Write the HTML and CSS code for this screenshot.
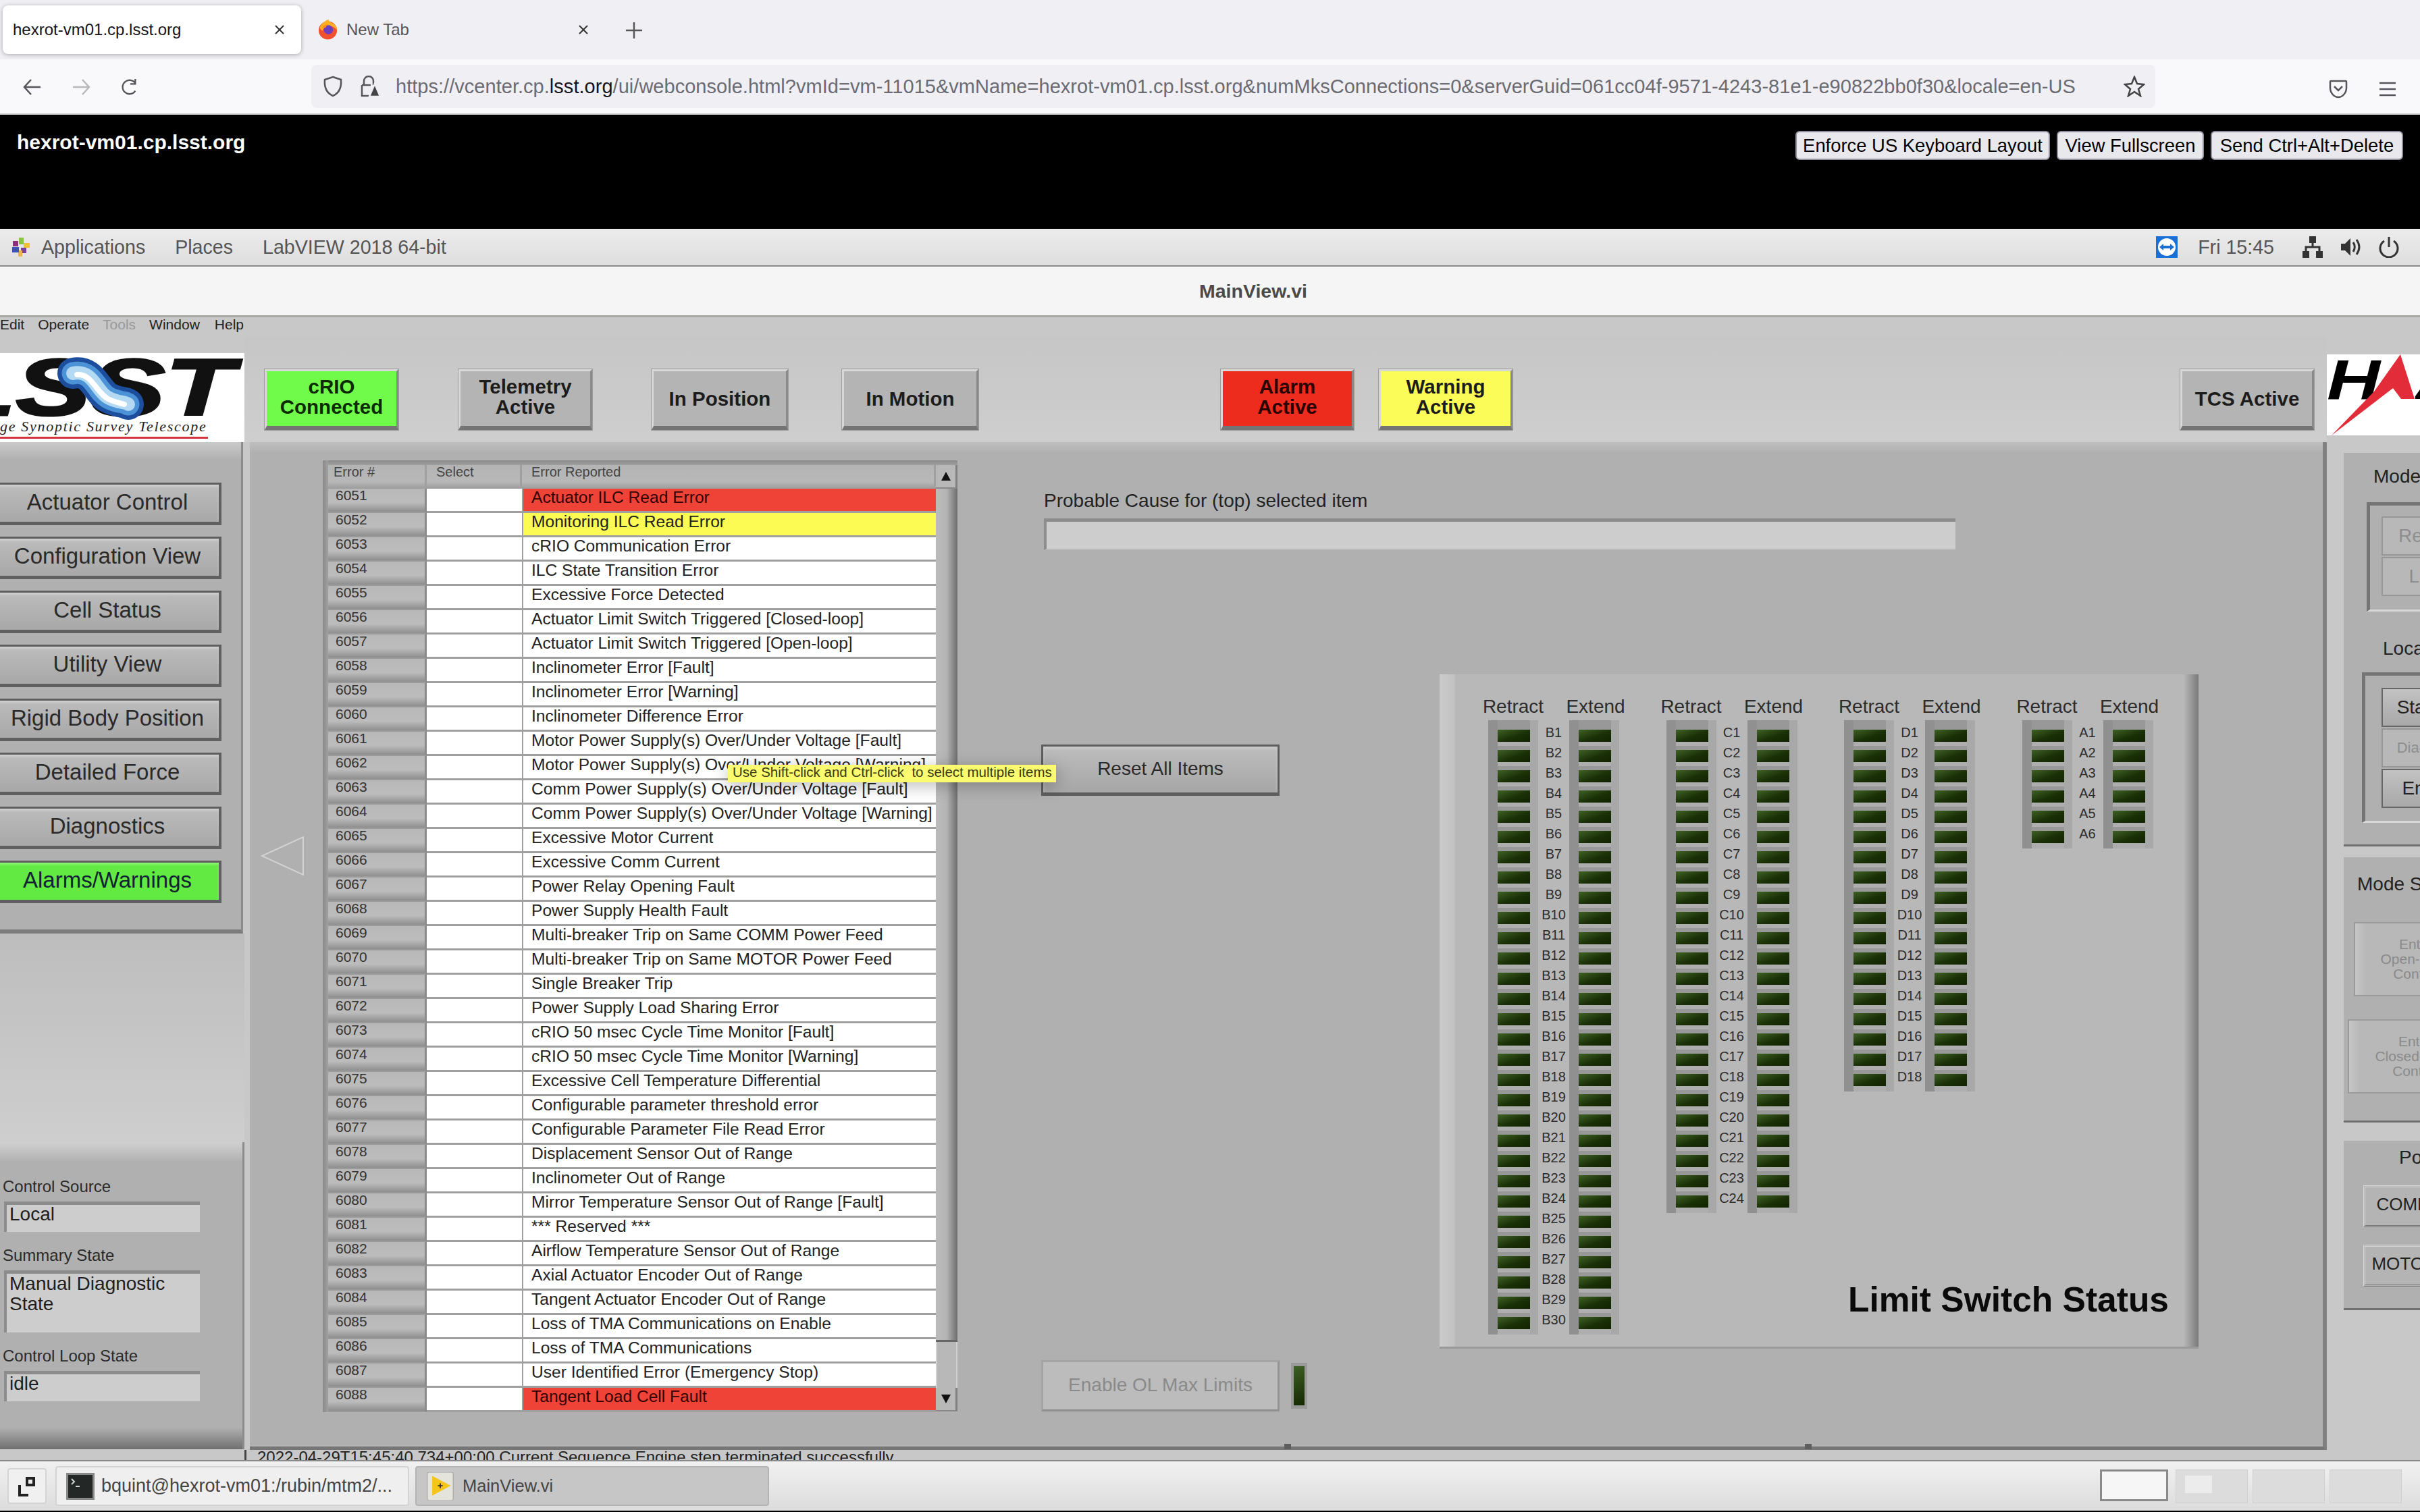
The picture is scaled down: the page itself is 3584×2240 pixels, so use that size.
FILE: index.html
```html
<!doctype html>
<html lang="en">
<head>
    <meta charset="UTF-8" />
    <title>hexrot-vm01.cp.lsst.org</title>
    <link rel="stylesheet" href="styles.css">
</head>
<body>

    <div class="tabstrip">
        <div class="tab tab-active">
            <span class="tab-title">hexrot-vm01.cp.lsst.org</span>
            <svg class="tab-close" viewBox="0 0 16 16"><path d="M2 2l12 12M14 2L2 14"/></svg>
        </div>
        <div class="tab tab-idle">
            <svg class="firefox" viewBox="0 0 32 32">
                <circle cx="16" cy="17" r="14" fill="#f2502f"/>
                <path d="M4 12C7 5 12 3 17 0c0 4 5 5 9 8 4 4 4 8 4 9-4-6-10-7-14-6-5 1-8 3-8 7-3-2-4-4-4-6z" fill="#ffb020"/>
                <circle cx="17" cy="16" r="7" fill="#6a3fc0"/>
                <path d="M7 14c1-4 5-6 9-6-2 2-3 3-3 5-2 0-4 0-6 1z" fill="#ff8a1e"/>
            </svg>
            <span class="tab-title">New Tab</span>
            <svg class="tab-close" viewBox="0 0 16 16"><path d="M2 2l12 12M14 2L2 14"/></svg>
        </div>
        <svg class="tab-plus" viewBox="0 0 26 26"><path d="M13 1v24M1 13h24"/></svg>
    </div>

    <div class="toolbar">
        <svg class="tool-icon" viewBox="0 0 28 26"><path d="M26 13H2M12 2L2 13l10 11"/></svg>
        <svg class="tool-icon tool-off" viewBox="0 0 28 26"><path d="M2 13h24M16 2l10 11-10 11"/></svg>
        <svg class="tool-icon" viewBox="0 0 28 28"><path d="M23 20a11 11 0 1 1 0-12M23 1v8h-8"/></svg>
        <div class="urlbar">
            <svg class="shield" viewBox="0 0 30 32"><path d="M15 2l12 4c1 12-3 20-12 24C6 26 2 18 3 6z"/></svg>
            <svg class="lock" viewBox="0 0 32 32">
                <path d="M7 14V8a7 7 0 0 1 14 0v6M4 14h13M4 14v16h10"/>
                <path class="lock-warn" d="M23 12l8 19H15z"/>
            </svg>
            <span class="url-text">https://vcenter.cp.<b>lsst.org</b>/ui/webconsole.html?vmId=vm-11015&amp;vmName=hexrot-vm01.cp.lsst.org&amp;numMksConnections=0&amp;serverGuid=061cc04f-9571-4243-81e1-e90822bb0f30&amp;locale=en-US</span>
            <svg class="star" viewBox="0 0 32 32"><path d="M16 2l4 10 10 1-8 7 3 10-9-6-9 6 3-10-8-7 10-1z"/></svg>
        </div>
        <svg class="pocket" viewBox="0 0 28 28"><path d="M3 2h22a1 1 0 0 1 1 1v9c0 8-6 14-12 14S2 20 2 12V3a1 1 0 0 1 1-1zM8 10l6 6 6-6"/></svg>
        <svg class="menu-icon" viewBox="0 0 26 22"><path d="M1 2h24M1 11h24M1 20h24"/></svg>
    </div>

    <div class="remote-bar">
        <div class="remote-title">hexrot-vm01.cp.lsst.org</div>
        <div class="remote-buttons">
            <button class="remote-btn">Enforce US Keyboard Layout</button>
            <button class="remote-btn">View Fullscreen</button>
            <button class="remote-btn">Send Ctrl+Alt+Delete</button>
        </div>
    </div>

    <div class="gnome-panel">
        <svg class="apps-icon" viewBox="0 0 28 28">
            <rect x="11" y="0" width="7" height="10" fill="#8bc34a"/>
            <rect x="18" y="8" width="9" height="7" fill="#f2c037"/>
            <rect x="14" y="15" width="8" height="8" fill="#7b3fa0"/>
            <rect x="10" y="19" width="6" height="9" fill="#e9b44c"/>
            <rect x="1" y="14" width="10" height="8" fill="#3f51b5"/>
            <rect x="2" y="5" width="8" height="8" fill="#8e2f7f"/>
        </svg>
        <span class="gnome-item gnome-apps">Applications</span>
        <span class="gnome-item gnome-places">Places</span>
        <span class="gnome-item gnome-lv">LabVIEW 2018 64-bit</span>
        <div class="gnome-right">
            <svg class="tv-icon" viewBox="0 0 32 32">
                <rect width="32" height="32" fill="#1a6fd6"/>
                <circle cx="16" cy="16" r="13" fill="#fff"/>
                <path d="M5 16l6-5v3h10v-3l6 5-6 5v-3H11v3z" fill="#1a6fd6"/>
            </svg>
            <span class="gnome-clock">Fri 15:45</span>
            <svg class="net-icon" viewBox="0 0 30 32"><path d="M10 0h10v10H10zM0 22h10v10H0zM20 22h10v10H20z"/><path class="net-line" d="M15 10v6M5 22v-6h20v6"/></svg>
            <svg class="snd-icon" viewBox="0 0 32 32"><path d="M2 11h6l8-8v26l-8-8H2z"/><path class="snd-wave" d="M20 9c3 4 3 10 0 14M25 5c5 7 5 15 0 22"/></svg>
            <svg class="pwr-icon" viewBox="0 0 30 32"><path d="M8 7a13 13 0 1 0 14 0M15 1v15"/></svg>
        </div>
    </div>

    <div class="titlebar">MainView.vi</div>

    <div class="menubar">
        <span class="menu-edit">Edit</span>
        <span class="menu-op">Operate</span>
        <span class="menu-tools">Tools</span>
        <span class="menu-win">Window</span>
        <span class="menu-help">Help</span>
    </div>

    <div class="front-panel">

        <div class="left-col">
            <svg class="lsst-logo" viewBox="0 0 362 132">
                <text class="lsst-word" x="-78" y="92" textLength="424" lengthAdjust="spacingAndGlyphs">LSST</text>
                <path d="M108 30c30-6 34 26 52 36 14 8 26 6 30 10" fill="none" stroke="#1d4e9e" stroke-width="46" stroke-linecap="round"/>
                <path d="M108 30c30-6 34 26 52 36 14 8 26 6 30 10" fill="none" stroke="#4b93d6" stroke-width="33" stroke-linecap="round"/>
                <path d="M108 30c30-6 34 26 52 36 14 8 26 6 30 10" fill="none" stroke="#b4daf3" stroke-width="20" stroke-linecap="round"/>
                <path d="M114 32c22-2 28 26 46 36 10 5 18 6 24 8" fill="none" stroke="#fff" stroke-width="8" stroke-linecap="round"/>
                <text class="lsst-sub" x="0" y="116">ge Synoptic Survey Telescope</text>
                <rect x="0" y="124" width="308" height="3" fill="#d5343c"/>
            </svg>
            <div class="nav-panel" id="nav-panel"></div>
            <div class="left-gap"></div>
            <div class="info-panel">
                <div class="info-label">Control Source</div>
                <div class="info-field">Local</div>
                <div class="info-label">Summary State</div>
                <div class="info-field info-tall">Manual Diagnostic State</div>
                <div class="info-label">Control Loop State</div>
                <div class="info-field">idle</div>
            </div>
        </div>

        <div class="center-col">
            <div class="status-row">
                <div class="st-btn st-two st-green st-crio">cRIO<br>Connected</div>
                <div class="st-btn st-two st-telemetry">Telemetry<br>Active</div>
                <div class="st-btn st-position">In Position</div>
                <div class="st-btn st-motion">In Motion</div>
                <div class="st-btn st-two st-red st-alarm">Alarm<br>Active</div>
                <div class="st-btn st-two st-yellow st-warning">Warning<br>Active</div>
                <div class="st-btn st-tcs">TCS Active</div>
            </div>

            <div class="main-panel">
                <div class="arrow-col">
                    <svg viewBox="0 0 66 60"><path d="M64 2v56L3 30z"/></svg>
                </div>

                <div class="error-table">
                    <div class="err-rows">
                        <div class="err-row err-head">
                            <div class="err-num">Error #</div>
                            <div class="err-sel">Select</div>
                            <div class="err-msg">Error Reported</div>
                        </div>
                        <div id="err-body"></div>
                    </div>
                    <div class="scrollbar">
                        <div class="scroll-btn"><span class="tri-up"></span></div>
                        <div class="scroll-thumb"></div>
                        <div class="scroll-track"></div>
                        <div class="scroll-btn"><span class="tri-down"></span></div>
                    </div>
                </div>

                <div class="tooltip">Use Shift-click and Ctrl-click  to select multiple items</div>

                <div class="side">
                    <div class="probable">
                        <div class="probable-label">Probable Cause for (top) selected item</div>
                        <div class="probable-field"></div>
                    </div>
                    <div class="limit-row">
                        <div class="controls">
                            <div class="ctl-btn reset-btn">Reset All Items</div>
                            <div class="enable-row">
                                <div class="ctl-btn enable-btn">Enable OL Max Limits</div>
                                <div class="enable-led"><span></span></div>
                            </div>
                        </div>
                        <div class="limit-panel">
                            <div class="led-groups" id="led-groups"></div>
                            <div class="limit-title">Limit Switch Status</div>
                        </div>
                    </div>
                </div>

                <span class="handle handle-a"></span>
                <span class="handle handle-b"></span>
            </div>

            <div class="status-line">2022-04-29T15:45:40.734+00:00 Current Sequence Engine step terminated successfully.</div>
        </div>

        <div class="right-col">
            <svg class="hae-logo" viewBox="0 0 138 120">
                <rect width="138" height="120" fill="#fff"/>
                <text class="hae-word" x="0" y="67" textLength="79" lengthAdjust="spacingAndGlyphs">H</text>
                <path d="M7 120L70 55 109 0l21 66h-20L98 50z" fill="#e22c3a"/>
                <path d="M131 62l7-10v14h-7z" fill="#000"/>
            </svg>

            <div class="rp-box rp-mode">
                <div class="rp-label rp-l-mode">Mode</div>
                <div class="rp-frame rp-f-mode">
                    <div class="rp-btn rp-dim">Remote</div>
                    <div class="rp-btn rp-dim">Local</div>
                </div>
                <div class="rp-label rp-l-local">Local</div>
                <div class="rp-frame rp-f-local">
                    <div class="rp-btn">Standby</div>
                    <div class="rp-btn rp-dim rp-small">Diagnostic</div>
                    <div class="rp-btn">Enable</div>
                </div>
            </div>

            <div class="rp-box rp-select">
                <div class="rp-label rp-l-select">Mode Select</div>
                <div class="rp-enter rp-open">Enter<br>Open-Loop<br>Control</div>
                <div class="rp-enter rp-closed">Enter<br>Closed-Loop<br>Control</div>
            </div>

            <div class="rp-box rp-power">
                <div class="rp-label rp-l-power">Power</div>
                <div class="rp-pwr">COMM Power</div>
                <div class="rp-pwr">MOTOR Power</div>
            </div>
        </div>
    </div>

    <div class="taskbar">
        <div class="task-switch">
            <svg viewBox="0 0 28 32"><path d="M12 2h14v14H12z" fill="#222"/><path d="M16 6h6v6h-6z" fill="#eee"/><path d="M3 14v15h13" fill="none" stroke="#222" stroke-width="4"/></svg>
        </div>
        <div class="task task-term">
            <svg class="task-icon" viewBox="0 0 42 40">
                <rect width="42" height="40" fill="#888"/>
                <rect x="3" y="3" width="36" height="34" fill="#232826"/>
                <path d="M8 9l4 4-4 4M14 20h6" fill="none" stroke="#cfd6d2" stroke-width="2"/>
            </svg>
            <span>bquint@hexrot-vm01:/rubin/mtm2/...</span>
        </div>
        <div class="task task-main">
            <svg class="task-icon" viewBox="0 0 42 46">
                <rect width="42" height="46" rx="3" fill="#e4e4dc" stroke="#999"/>
                <path d="M8 6l30 16L8 38z" fill="#f5c518"/>
                <path d="M17 22h8M21 18v8" stroke="#333" stroke-width="2"/>
            </svg>
            <span>MainView.vi</span>
        </div>
        <div class="workspaces">
            <div class="ws ws-active"></div>
            <div class="ws"><span class="ws-win"></span></div>
            <div class="ws"></div>
            <div class="ws"></div>
        </div>
    </div>
    <div class="bottom-line"></div>

    <script>
        const navItems = ["Actuator Control", "Configuration View", "Cell Status", "Utility View", "Rigid Body Position", "Detailed Force", "Diagnostics", "Alarms/Warnings"];
        const errors = [
            "Actuator ILC Read Error", "Monitoring ILC Read Error", "cRIO Communication Error", "ILC State Transition Error",
            "Excessive Force Detected", "Actuator Limit Switch Triggered [Closed-loop]", "Actuator Limit Switch Triggered [Open-loop]",
            "Inclinometer Error [Fault]", "Inclinometer Error [Warning]", "Inclinometer Difference Error",
            "Motor Power Supply(s) Over/Under Voltage [Fault]", "Motor Power Supply(s) Over/Under Voltage [Warning]",
            "Comm Power Supply(s) Over/Under Voltage [Fault]", "Comm Power Supply(s) Over/Under Voltage [Warning]",
            "Excessive Motor Current", "Excessive Comm Current", "Power Relay Opening Fault", "Power Supply Health Fault",
            "Multi-breaker Trip on Same COMM Power Feed", "Multi-breaker Trip on Same MOTOR Power Feed", "Single Breaker Trip",
            "Power Supply Load Sharing Error", "cRIO 50 msec Cycle Time Monitor [Fault]", "cRIO 50 msec Cycle Time Monitor [Warning]",
            "Excessive Cell Temperature Differential", "Configurable parameter threshold error", "Configurable Parameter File Read Error",
            "Displacement Sensor Out of Range", "Inclinometer Out of Range", "Mirror Temperature Sensor Out of Range [Fault]",
            "*** Reserved ***", "Airflow Temperature Sensor Out of Range", "Axial Actuator Encoder Out of Range",
            "Tangent Actuator Encoder Out of Range", "Loss of TMA Communications on Enable", "Loss of TMA Communications",
            "User Identified Error (Emergency Stop)", "Tangent Load Cell Fault"
        ];
        const rowColors = { 0: "err-red", 1: "err-yellow", 37: "err-red" };
        const ledGroups = [["B", 30], ["C", 24], ["D", 18], ["A", 6]];

        let navHtml = "";
        navItems.forEach((item, i) => {
            navHtml += `<div class="nav-btn${i === 7 ? " nav-on" : ""}">${item}</div>`;
        });
        document.getElementById("nav-panel").innerHTML = navHtml;

        let rowHtml = "";
        errors.forEach((text, i) => {
            rowHtml += `<div class="err-row"><div class="err-num">${6051 + i}</div><div class="err-sel"></div><div class="err-msg ${rowColors[i] || ""}">${text}</div></div>`;
        });
        document.getElementById("err-body").innerHTML = rowHtml;

        let groupHtml = "";
        ledGroups.forEach(([letter, count]) => {
            groupHtml += `<div class="led-group"><div class="led-head"><span>Retract</span><span></span><span>Extend</span></div>`;
            for (let n = 1; n <= count; n++) {
                groupHtml += `<div class="led-row"><div class="led-cell"><i></i></div><div class="led-label">${letter}${n}</div><div class="led-cell"><i></i></div></div>`;
            }
            groupHtml += `</div>`;
        });
        document.getElementById("led-groups").innerHTML = groupHtml;
    </script>
</body>
</html>
```

FILE: styles.css
```css
* {
    box-sizing: border-box;
}
body {
    margin: 0;
    width: 3584px;
    height: 2240px;
    overflow: hidden;
    font-family: "Liberation Sans", Arial, sans-serif;
    color: #222;
    background: #000;
}
svg {
    display: block;
    flex: none;
}

/* browser chrome */
.tabstrip {
    height: 88px;
    background: #f0f0f4;
    display: flex;
    align-items: flex-start;
    padding: 8px 0 0 4px;
}
.tab {
    height: 72px;
    display: flex;
    align-items: center;
    font-size: 24px;
}
.tab-active {
    width: 442px;
    background: #fff;
    border-radius: 8px;
    box-shadow: 0 1px 6px rgba(0, 0, 0, 0.3);
    padding: 0 24px 0 15px;
    color: #15141a;
}
.tab-idle {
    width: 434px;
    margin-left: 16px;
    padding: 0 24px 0 8px;
    color: #55555c;
}
.tab-close {
    width: 16px;
    height: 16px;
    margin-left: auto;
    fill: none;
    stroke: #333;
    stroke-width: 2;
}
.firefox {
    width: 31px;
    height: 32px;
    margin-right: 12px;
}
.tab-plus {
    width: 26px;
    height: 26px;
    margin: 24px 0 0 30px;
    fill: none;
    stroke: #555;
    stroke-width: 2.5;
}
.toolbar {
    height: 82px;
    background: #f9f9fb;
    border-bottom: 2px solid #ccc;
    display: flex;
    align-items: flex-start;
    padding: 8px 0 0 34px;
}
.tool-icon {
    width: 28px;
    height: 26px;
    margin: 20px 44px 0 0;
    fill: none;
    stroke: #55555c;
    stroke-width: 2.5;
}
.tool-off {
    stroke: #b8b8bc;
}
.urlbar {
    width: 2731px;
    height: 64px;
    margin-left: 211px;
    background: #f0f0f4;
    border-radius: 8px;
    display: flex;
    align-items: center;
    padding: 0 15px 0 17px;
}
.shield {
    width: 30px;
    height: 32px;
    fill: none;
    stroke: #55555c;
    stroke-width: 2.5;
}
.lock {
    width: 32px;
    height: 32px;
    margin-left: 24px;
    fill: none;
    stroke: #55555c;
    stroke-width: 2.5;
}
.lock .lock-warn {
    fill: #444;
    stroke: #f0f0f4;
}
.url-text {
    margin-left: 22px;
    font-size: 29px;
    letter-spacing: 0.03px;
    color: #6b6b73;
    white-space: nowrap;
}
.url-text b {
    font-weight: normal;
    color: #15141a;
}
.star {
    width: 32px;
    height: 32px;
    margin-left: auto;
    fill: none;
    stroke: #444;
    stroke-width: 2.5;
}
.pocket {
    width: 28px;
    height: 28px;
    margin: 22px 0 0 257px;
    fill: none;
    stroke: #55555c;
    stroke-width: 2.5;
}
.menu-icon {
    width: 26px;
    height: 22px;
    margin: 25px 0 0 46px;
    fill: none;
    stroke: #55555c;
    stroke-width: 2.5;
}

/* vsphere bar */
.remote-bar {
    height: 169px;
    background: #000;
    display: flex;
    justify-content: space-between;
    align-items: flex-start;
    padding: 24px 25px;
}
.remote-title {
    color: #fff;
    font-size: 30px;
    font-weight: bold;
}
.remote-buttons {
    display: flex;
    gap: 10px;
}
.remote-btn {
    width: 377px;
    height: 43px;
    padding: 0;
    background: #e9e9ed;
    border: 2px solid #8f8f9d;
    border-radius: 6px;
    font-family: "Liberation Sans", Arial, sans-serif;
    font-size: 27.4px;
    color: #000;
}
.remote-btn:nth-child(2) {
    width: 218px;
}
.remote-btn:nth-child(3) {
    width: 285px;
}

/* gnome top panel */
.gnome-panel {
    height: 56px;
    background: linear-gradient(#ececec, #dedede);
    border-bottom: 2px solid #8a8a8a;
    display: flex;
    align-items: center;
    padding-left: 17px;
    color: #555;
    font-size: 28.6px;
}
.apps-icon {
    width: 28px;
    height: 28px;
}
.gnome-apps {
    margin-left: 16px;
}
.gnome-places {
    margin-left: 44px;
}
.gnome-lv {
    margin-left: 44px;
}
.gnome-right {
    margin-left: auto;
    display: flex;
    align-items: center;
    padding-right: 31px;
}
.tv-icon {
    width: 32px;
    height: 32px;
}
.gnome-clock {
    margin-left: 30px;
}
.net-icon {
    width: 30px;
    height: 32px;
    margin-left: 42px;
    fill: #333;
}
.net-icon .net-line {
    fill: none;
    stroke: #333;
    stroke-width: 3;
}
.snd-icon {
    width: 32px;
    height: 32px;
    margin-left: 25px;
    fill: #333;
}
.snd-icon .snd-wave {
    fill: none;
    stroke: #333;
    stroke-width: 3;
}
.pwr-icon {
    width: 30px;
    height: 32px;
    margin-left: 26px;
    fill: none;
    stroke: #333;
    stroke-width: 3;
}
.titlebar {
    height: 72px;
    line-height: 72px;
    background: #f5f5f5;
    text-align: center;
    padding-left: 128px;
    font-size: 28.5px;
    font-weight: bold;
    color: #4a4a4a;
}
.menubar {
    height: 32px;
    background: #c8c8c8;
    border-top: 3px solid #a8a8a4;
    display: flex;
    font-size: 21px;
    line-height: 21px;
    color: #222;
}
.menu-op {
    margin-left: 20px;
}
.menu-tools {
    margin-left: 20px;
    color: #999;
}
.menu-win {
    margin-left: 20px;
}
.menu-help {
    margin-left: 22px;
}

/* labview front panel */
.front-panel {
    height: 1664px;
    display: flex;
    overflow: hidden;
    background: #c8c8c8;
}
.left-col {
    width: 362px;
    flex: none;
    padding-top: 24px;
}
.lsst-logo {
    width: 362px;
    height: 132px;
    background: #fff;
}
.lsst-word {
    font: italic bold 118px "Liberation Sans", Arial, sans-serif;
    fill: #111;
    stroke: #111;
    stroke-width: 3px;
}
.lsst-sub {
    font: italic 22px "Liberation Serif", serif;
    fill: #222;
    letter-spacing: 1.7px;
}
.nav-panel {
    width: 360px;
    height: 728px;
    padding-top: 60px;
    background: linear-gradient(#cacaca, #b0b0b0 26px);
    border-right: 3px solid #8c8c8c;
    border-bottom: 6px solid #7c7c7c;
}
.nav-btn {
    width: 334px;
    height: 63px;
    margin: 0 0 17px -6px;
    display: flex;
    align-items: center;
    justify-content: center;
    padding: 0 3px 4px 0;
    font-size: 33px;
    color: #2a2a2a;
    background: linear-gradient(#bcbcbc, #a8a8a8);
    border: 3px solid #606060;
    border-bottom-width: 5px;
    border-right-width: 4px;
    box-shadow: inset 0 3px 3px #cfcfcf;
}
.nav-on {
    background: #62ea42;
    color: #123;
    box-shadow: inset 0 3px 3px #8cf572;
}
.left-gap {
    height: 309px;
    background: linear-gradient(#bdbdbd, #cecece);
}
.info-panel {
    width: 362px;
    height: 455px;
    padding: 52px 0 0 6px;
    background: linear-gradient(#d0d0d0, #b0b0b0 30px, #b0b0b0 93%, #6f6f6f);
    border-right: 3px solid #8c8c8c;
}
.info-label {
    height: 28px;
    margin: 0 0 8px -2px;
    line-height: 28px;
    font-size: 24px;
    color: #2a2a2a;
}
.info-field {
    width: 290px;
    height: 45px;
    margin-bottom: 21px;
    padding: 0 4px;
    font-size: 28px;
    line-height: 27px;
    background: #cdcdcd;
    border-top: 5px solid #8c8c8c;
    border-left: 4px solid #8c8c8c;
    color: #1e1e1e;
}
.info-tall {
    height: 92px;
    line-height: 30px;
}
.center-col {
    width: 3084px;
    flex: none;
}
.status-row {
    height: 156px;
    display: flex;
    align-items: flex-start;
    padding: 48px 0 0 30px;
    background: linear-gradient(#c6c6c6, #cecece);
}
.st-btn {
    width: 198px;
    height: 90px;
    display: flex;
    align-items: center;
    justify-content: center;
    text-align: center;
    font-size: 29.5px;
    line-height: 30px;
    font-weight: bold;
    color: #1c1c1c;
    background: #b4b4b4;
    border: 3px solid #d8d8d8;
    border-bottom: 6px solid #747474;
    border-right-color: #8a8a8a;
    outline: 1px solid #9c9c9c;
}
.st-two {
    padding-bottom: 5px;
}
.st-green {
    background: #70fb4a;
    color: #0c2a00;
}
.st-red {
    background: #ee2c1e;
    color: #2a0000;
}
.st-yellow {
    background: #fcfc58;
}
.st-telemetry {
    margin-left: 89px;
}
.st-position {
    margin-left: 88px;
    width: 202px;
}
.st-motion {
    margin-left: 80px;
    width: 202px;
}
.st-alarm {
    margin-left: 359px;
    width: 197px;
}
.st-warning {
    margin-left: 37px;
}
.st-tcs {
    margin-left: 989px;
}
.main-panel {
    position: relative;
    width: 3076px;
    height: 1493px;
    margin-left: 8px;
    padding-top: 27px;
    display: flex;
    align-items: flex-start;
    background: linear-gradient(#bebebe, #b0b0b0 16px);
    border-right: 6px solid #808080;
    border-bottom: 5px solid #767676;
}
.arrow-col {
    width: 108px;
    flex: none;
    padding: 556px 0 0 15px;
}
.arrow-col svg {
    width: 66px;
    height: 60px;
    fill: #b0b0b0;
    stroke: #d2d2d2;
    stroke-width: 2;
}

/* error table */
.error-table {
    width: 940px;
    flex: none;
    display: flex;
    padding: 7px 0 0 8px;
    background: linear-gradient(90deg, #8a8a8a, #a0a0a0 8px, transparent 8px), linear-gradient(#8a8a8a, #a0a0a0 7px, transparent 7px);
}
.err-rows {
    width: 900px;
    flex: none;
}
.err-row {
    height: 36px;
    display: flex;
}
.err-head {
    height: 35px;
}
.err-num {
    width: 146px;
    padding-left: 11px;
    font-size: 21px;
    line-height: 19px;
    color: #333;
    background: linear-gradient(#b8b8b8, #bcbcbc 60%, #8e8e8e);
    border-right: 3px solid #8a8a8a;
    border-bottom: 2px solid #9a9a9a;
}
.err-sel {
    width: 141px;
    background: #fff;
    border-bottom: 3px solid #a0a0a0;
}
.err-msg {
    width: 613px;
    padding-left: 12px;
    border-left: 2px solid #a0a0a0;
    border-bottom: 3px solid #a0a0a0;
    background: #fff;
    font-size: 24.6px;
    line-height: 26px;
    white-space: nowrap;
    color: #222;
}
.err-red {
    background: #ef4338;
    color: #300;
}
.err-yellow {
    background: #fbfb54;
}
.err-head .err-num,
.err-head .err-sel,
.err-head .err-msg {
    padding-left: 14px;
    background: linear-gradient(#b4b4b4, #b8b8b8 70%, #9c9c9c);
    border-bottom: none;
    border-left: none;
    border-right: 3px solid #a0a0a0;
    font-size: 20px;
    line-height: 20px;
    color: #444;
}
.err-head .err-num {
    padding-left: 8px;
}
.scrollbar {
    width: 32px;
    flex: none;
    display: flex;
    flex-direction: column;
}
.scroll-btn {
    height: 35px;
    display: flex;
    align-items: center;
    justify-content: center;
    background: #b8b8b8;
    border-right: 3px solid #808080;
    border-bottom: 2px solid #888;
}
.tri-up {
    border: 7px solid transparent;
    border-top: none;
    border-bottom: 13px solid #111;
}
.tri-down {
    border: 7px solid transparent;
    border-bottom: none;
    border-top: 13px solid #111;
}
.scroll-thumb {
    height: 1264px;
    background: linear-gradient(90deg, #bcbcbc, #b4b4b4 50%, #6e6e6e);
    border-bottom: 3px solid #666;
}
.scroll-track {
    height: 68px;
    background: #b8b8b8;
    border-left: 2px solid #d0d0d0;
    border-right: 2px solid #d0d0d0;
}
.tooltip {
    position: absolute;
    left: 708px;
    top: 478px;
    width: 486px;
    height: 26px;
    padding-left: 7px;
    font-size: 20.5px;
    line-height: 21px;
    white-space: pre;
    color: #3a3a10;
    background: #fbfb70;
    box-shadow: 0 5px 24px rgba(0, 0, 0, 0.28);
}

/* middle and limit switches */
.side {
    width: 1714px;
    flex: none;
    margin-left: 124px;
}
.probable {
    height: 317px;
    padding: 45px 0 0 4px;
}
.probable-label {
    height: 30px;
    line-height: 30px;
    font-size: 28px;
    color: #222;
}
.probable-field {
    width: 1350px;
    height: 47px;
    margin-top: 11px;
    background: #cdcdcd;
    border-top: 5px solid #8c8c8c;
    border-left: 4px solid #8c8c8c;
    border-bottom: 2px solid #bbb;
}
.limit-row {
    display: flex;
    align-items: flex-start;
}
.controls {
    width: 590px;
    flex: none;
    padding-top: 104px;
}
.ctl-btn {
    width: 353px;
    height: 76px;
    display: flex;
    align-items: center;
    justify-content: center;
    padding-bottom: 3px;
}
.reset-btn {
    font-size: 28px;
    color: #2a2a2a;
    background: linear-gradient(#bdbdbd, #a6a6a6);
    border: 3px solid #5e5e5e;
    border-bottom-width: 5px;
    box-shadow: inset 0 3px 4px #cccccc;
}
.enable-row {
    margin-top: 836px;
    display: flex;
    align-items: center;
    gap: 17px;
}
.enable-btn {
    font-size: 28px;
    color: #8a8a8a;
    background: #bcbcbc;
    border: 3px solid #a4a4a4;
    border-bottom-color: #8e8e8e;
    border-right-color: #949494;
}
.enable-led {
    width: 24px;
    height: 68px;
    padding: 5px 4px;
    background: #999;
}
.enable-led span {
    display: block;
    height: 100%;
    background: linear-gradient(160deg, #3d5f24, #142800);
}
.limit-panel {
    width: 1124px;
    height: 999px;
    display: grid;
    background: linear-gradient(90deg, #cbcbcb, #c2c2c2 22px, #b8b8b8 23px, #b8b8b8 1102px, #7a7a7a);
    border-bottom: 3px solid #9a9a9a;
}
.led-groups {
    grid-area: 1 / 1;
    display: flex;
    align-items: flex-start;
    gap: 69.5px;
    padding: 33px 0 0 72px;
}
.limit-title {
    grid-area: 1 / 1;
    align-self: end;
    justify-self: end;
    margin: 0 44px 42px 0;
    font-size: 51.5px;
    font-weight: bold;
    line-height: 56px;
    color: #0a0a0a;
}
.led-group {
    width: 194px;
    flex: none;
}
.led-head,
.led-row {
    display: grid;
    grid-template-columns: 74px 46px 74px;
}
.led-head {
    height: 35px;
    font-size: 28px;
    line-height: 30px;
    color: #2c2c2c;
}
.led-head span {
    display: flex;
    justify-content: center;
    white-space: nowrap;
}
.led-head span:last-child {
    padding-left: 4px;
}
.led-cell {
    padding: 6px 12px 6px 14px;
    background: linear-gradient(90deg, #909090 14px, transparent 14px, transparent 62px, #a8a8a8 62px), linear-gradient(#989898 50%, #aeaeae 50%);
}
.led-cell i {
    display: block;
    height: 18px;
    background: linear-gradient(160deg, #3f6226, #1a3006 55%, #112200);
}
.led-row:nth-child(2) .led-cell {
    padding-top: 14px;
}
.led-row:last-child .led-cell {
    padding-bottom: 8px;
}
.led-label {
    height: 30px;
    line-height: 20px;
    font-size: 20px;
    text-align: center;
    white-space: nowrap;
    color: #2c2c2c;
}
.led-row:nth-child(2) .led-label {
    align-self: end;
}
.handle {
    position: absolute;
    bottom: -4px;
    width: 10px;
    height: 8px;
    background: #5e5e5e;
}
.handle-a {
    left: 1532px;
}
.handle-b {
    left: 2303px;
}
.status-line {
    height: 15px;
    padding-left: 16px;
    overflow: hidden;
    font-size: 24px;
    line-height: 22px;
    white-space: nowrap;
    color: #222;
    background: #c8c8c8;
    border-left: 3px solid #444;
}

/* right column */
.right-col {
    width: 138px;
    flex: none;
    overflow: hidden;
    padding-top: 26px;
}
.hae-logo {
    width: 138px;
    height: 120px;
}
.hae-word {
    font: italic bold 84px "Liberation Sans", Arial, sans-serif;
    fill: #000;
}
.rp-box {
    width: 300px;
    margin-left: 25px;
    background: #b0b0b0;
    border-bottom: 3px solid #707070;
}
.rp-mode {
    height: 583px;
    margin-top: 26px;
    padding-top: 20px;
}
.rp-select {
    height: 393px;
    margin-top: 16px;
    padding-top: 25px;
}
.rp-power {
    height: 251px;
    margin-top: 27px;
    padding-top: 10px;
}
.rp-label {
    height: 30px;
    line-height: 30px;
    font-size: 28px;
    white-space: nowrap;
    color: #222;
}
.rp-l-mode {
    margin-left: 44px;
}
.rp-l-local {
    margin: 40px 0 0 58px;
}
.rp-l-select {
    margin-left: 20px;
}
.rp-l-power {
    margin-left: 82px;
}
.rp-frame {
    border-left: 5px solid #757575;
    border-top: 5px solid #757575;
    border-bottom: 3px solid #d8d8d8;
}
.rp-f-mode {
    margin: 23px 0 0 34px;
    padding: 16px 0 18px 17px;
}
.rp-f-local {
    margin: 20px 0 0 27px;
    padding: 18px 0 17px 24px;
}
.rp-btn {
    width: 148px;
    height: 58px;
    margin-bottom: 2px;
    display: flex;
    align-items: center;
    justify-content: center;
    font-size: 28px;
    color: #222;
    background: linear-gradient(#c2c2c2, #a8a8a8);
    border: 2px solid #666;
    white-space: nowrap;
}
.rp-dim {
    color: #8e8e8e;
    background: #b8b8b8;
    border-color: #979797;
}
.rp-small {
    font-size: 22px;
}
.rp-enter {
    height: 110px;
    display: flex;
    align-items: center;
    justify-content: center;
    text-align: center;
    font-size: 21px;
    line-height: 22px;
    color: #8a8a8a;
    background: linear-gradient(90deg, #c6c6c6, #b8b8b8 16px);
    border: 2px solid #9a9a9a;
}
.rp-open {
    width: 184px;
    margin: 41px 0 0 15px;
}
.rp-closed {
    width: 200px;
    margin: 34px 0 0 6px;
}
.rp-pwr {
    width: 202px;
    height: 62px;
    margin: 26px 0 0 29px;
    padding-bottom: 6px;
    display: flex;
    align-items: center;
    justify-content: center;
    font-size: 26px;
    white-space: nowrap;
    color: #222;
    background: #b4b4b4;
    border: 3px double #d8d8d8;
    border-bottom-color: #777;
}

/* taskbar */
.taskbar {
    height: 75px;
    display: flex;
    align-items: center;
    padding: 0 27px 0 11px;
    background: linear-gradient(#f1f1f1, #dcdcdc);
    border-top: 2px solid #8a8a8a;
}
.task-switch {
    width: 58px;
    height: 53px;
    display: flex;
    align-items: center;
    justify-content: center;
    background: #f0f0f0;
    border: 2px solid #d4d4d4;
    border-radius: 4px;
}
.task-switch svg {
    width: 28px;
    height: 32px;
}
.task {
    width: 524px;
    height: 59px;
    margin-left: 13px;
    display: flex;
    align-items: center;
    font-size: 27px;
    color: #444;
    border: 2px solid #d4d4d4;
    border-radius: 4px;
}
.task-term {
    background: #efefef;
    padding-left: 14px;
    gap: 10px;
}
.task-main {
    margin-left: 9px;
    background: #c6c6c6;
    border-color: #b4b4b4;
    padding-left: 14px;
    gap: 12px;
    font-size: 25.5px;
}
.task-icon {
    width: 42px;
    height: 42px;
}
.workspaces {
    margin-left: auto;
    display: flex;
    gap: 7px;
}
.ws {
    width: 107px;
    height: 50px;
    padding: 8px 0 0 13px;
    background: #dcdcdc;
    border: 1px solid #d0d0d0;
}
.ws-active {
    width: 101px;
    height: 47px;
    margin-right: 4px;
    background: #f6f6f6;
    border: 3px solid #8a8a8a;
}
.ws-win {
    display: block;
    width: 40px;
    height: 26px;
    background: #ececec;
}
.bottom-line {
    height: 2px;
    background: #000;
}
```
